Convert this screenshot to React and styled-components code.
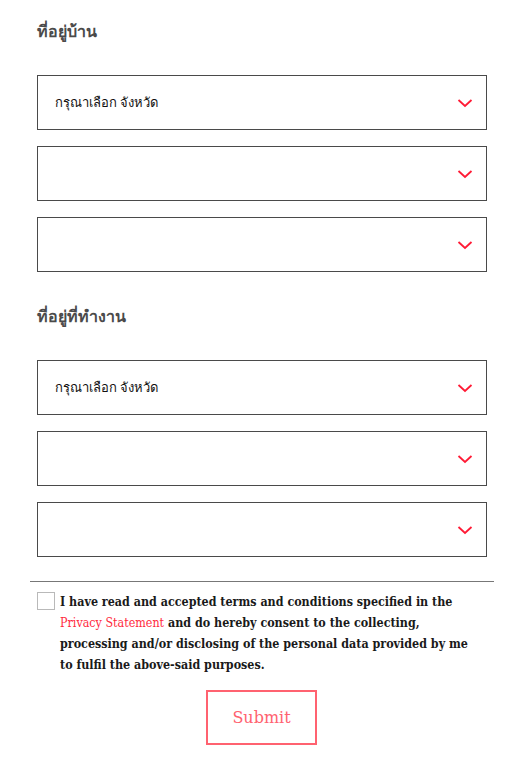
import React from "react";
import styled, { createGlobalStyle } from "styled-components";

const GlobalStyle = createGlobalStyle`
  body {
    margin: 0;
    background: #fff;
    font-family: "Noto Sans", "Liberation Sans", sans-serif;
  }
`;

const Page = styled.div`
  width: 515px;
  padding: 18px 0 0;
  box-sizing: border-box;
`;

const Section = styled.div`
  padding: 0 28px 0 37px;
  display: flex;
  flex-direction: column;
`;

const Heading = styled.h3`
  margin: 0 0 31px;
  height: 26px;
  font-size: 16px;
  font-weight: 700;
  color: #4a4a4a;
  line-height: 26px;
`;

const SelectList = styled.div`
  display: flex;
  flex-direction: column;
  gap: 16px;
  margin-bottom: ${(p) => p.$after}px;
`;

const SelectBox = styled.div`
  height: 55px;
  box-sizing: border-box;
  border: 1px solid #4a4a4a;
  display: flex;
  align-items: center;
  justify-content: space-between;
  padding: 0 13px 0 17px;
  font-size: 13px;
  color: #111;
`;

const Divider = styled.hr`
  margin: 0 21px 0 30px;
  border: none;
  border-top: 1px solid #777;
`;

const Consent = styled.label`
  display: flex;
  gap: 5px;
  padding: 9px 36px 0 37px;
  font-family: "DejaVu Serif Condensed", "DejaVu Serif", serif;
  font-stretch: condensed;
  font-weight: 700;
  font-size: 12.4px;
  line-height: 21px;
  color: #1a1a1a;
`;

const Box = styled.span`
  flex: none;
  width: 18px;
  height: 18px;
  box-sizing: border-box;
  border: 1px solid #b9b9b9;
  margin-top: 1px;
`;

const Link = styled.span`
  color: #ff2a3d;
  font-weight: 400;
`;

const Actions = styled.div`
  display: flex;
  justify-content: center;
  padding: 15px 0 0 8px;
`;

const SubmitButton = styled.button`
  width: 111px;
  height: 55px;
  background: #fff;
  border: 2px solid #ff6270;
  color: #ff6270;
  font-family: "DejaVu Serif", "Liberation Serif", serif;
  font-size: 16px;
`;

const Chevron = () => (
  <svg width="16" height="10" viewBox="0 0 16 10">
    <path d="M1.5 2 L8 8 L14.5 2" fill="none" stroke="#ff1a35" strokeWidth="1.8" />
  </svg>
);

const Select = ({ label }) => (
  <SelectBox>
    <span>{label}</span>
    <Chevron />
  </SelectBox>
);

const AddressGroup = ({ title, after }) => (
  <Section>
    <Heading>{title}</Heading>
    <SelectList $after={after}>
      <Select label="กรุณาเลือก จังหวัด" />
      <Select />
      <Select />
    </SelectList>
  </Section>
);

export default function App() {
  return (
    <Page>
      <GlobalStyle />
      <AddressGroup title="ที่อยู่บ้าน" after={31} />
      <AddressGroup title="ที่อยู่ที่ทำงาน" after={24} />
      <Divider />
      <Consent>
        <Box />
        <span>
          I have read and accepted terms and conditions specified in the{" "}
          <Link>Privacy Statement</Link> and do hereby consent to the collecting,
          processing and/or disclosing of the personal data provided by me to
          fulfil the above-said purposes.
        </span>
      </Consent>
      <Actions>
        <SubmitButton>Submit</SubmitButton>
      </Actions>
    </Page>
  );
}
